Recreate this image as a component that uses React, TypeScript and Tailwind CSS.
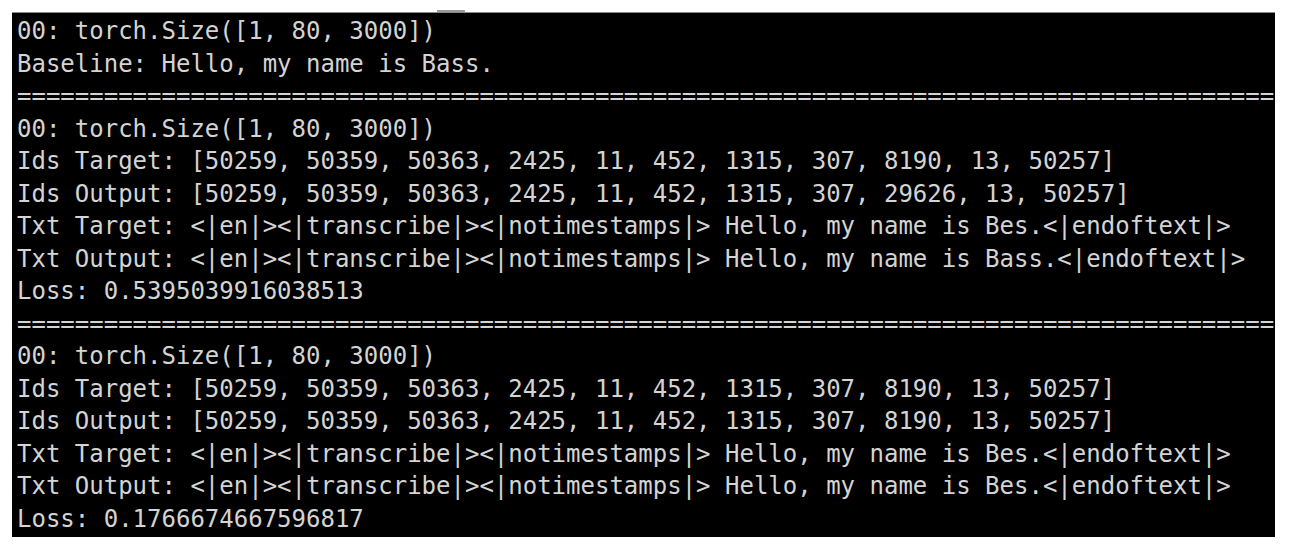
import React from "react";

const lines: { text: string; sep?: boolean }[] = [
  { text: "00: torch.Size([1, 80, 3000])" },
  { text: "Baseline: Hello, my name is Bass." },
  { text: "=".repeat(87), sep: true },
  { text: "00: torch.Size([1, 80, 3000])" },
  { text: "Ids Target: [50259, 50359, 50363, 2425, 11, 452, 1315, 307, 8190, 13, 50257]" },
  { text: "Ids Output: [50259, 50359, 50363, 2425, 11, 452, 1315, 307, 29626, 13, 50257]" },
  { text: "Txt Target: <|en|><|transcribe|><|notimestamps|> Hello, my name is Bes.<|endoftext|>" },
  { text: "Txt Output: <|en|><|transcribe|><|notimestamps|> Hello, my name is Bass.<|endoftext|>" },
  { text: "Loss: 0.5395039916038513" },
  { text: "=".repeat(87), sep: true },
  { text: "00: torch.Size([1, 80, 3000])" },
  { text: "Ids Target: [50259, 50359, 50363, 2425, 11, 452, 1315, 307, 8190, 13, 50257]" },
  { text: "Ids Output: [50259, 50359, 50363, 2425, 11, 452, 1315, 307, 8190, 13, 50257]" },
  { text: "Txt Target: <|en|><|transcribe|><|notimestamps|> Hello, my name is Bes.<|endoftext|>" },
  { text: "Txt Output: <|en|><|transcribe|><|notimestamps|> Hello, my name is Bes.<|endoftext|>" },
  { text: "Loss: 0.1766674667596817" },
];

export default function App() {
  return (
    <div className="w-[1292px] h-[549px] bg-white pt-[10px] pl-[12px] overflow-hidden">
      <div className="h-[2px] w-[28px] ml-[425px] bg-[#9a9a9a]" />
      <div
        className="w-[1263px] h-[525px] bg-black pl-[5px] pt-[2px] pb-[3px] border-t border-[#8a8a8a]"
        style={{ fontFamily: '"DejaVu Sans Mono", "Liberation Mono", monospace' }}
      >
        {lines.map((l, i) => (
          <div
            key={i}
            className="h-[32.5px] leading-[32.5px] text-[24px] text-[#d4d4d4] whitespace-pre"
          >
            {l.text}
          </div>
        ))}
      </div>
    </div>
  );
}
